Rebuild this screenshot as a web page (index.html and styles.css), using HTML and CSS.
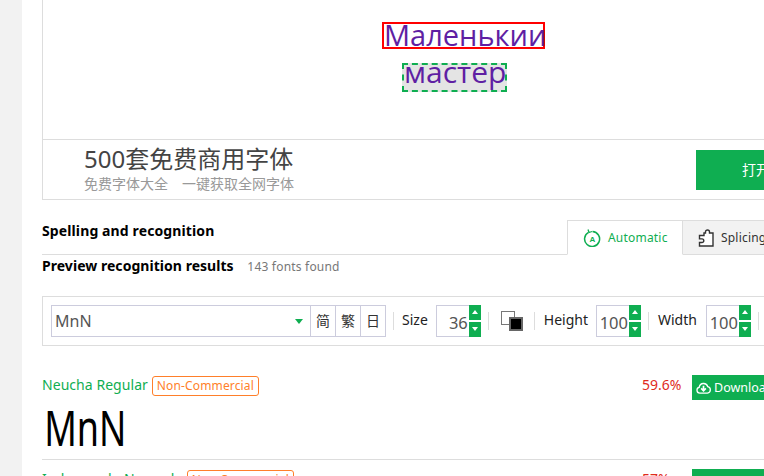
FILE: index.html
```html
<!DOCTYPE html>
<html>
<head>
    <meta charset="utf-8">
    <title>Font recognition</title>
    <link rel="stylesheet" href="styles.css">
</head>
<body>
<div class="page">
    <div class="side"></div>
    <div class="main">
        <div class="preview">
            <div class="canvas">
                <div class="mark mark-red">Маленькии</div>
                <div class="mark mark-green">мастер</div>
            </div>
            <div class="ad">
                <div class="ad-text">
                    <div class="ad-title">500套免费商用字体</div>
                    <div class="ad-sub"><span>免费字体大全</span><span>一键获取全网字体</span></div>
                </div>
                <div class="ad-btn">打开网站</div>
            </div>
        </div>

        <div class="tabs">
            <h3 class="tabs-title">Spelling and recognition</h3>
            <div class="tab tab-on">
                <svg width="18" height="18" viewBox="0 0 18 18" fill="none" stroke="#0fae51" stroke-width="1.5">
                    <path d="M5.500 3.400a7.500 7.500 0 1 0 4-.9"/>
                    <path d="M5 .5l1 3 3-1" stroke-width="1.300"/>
                    <text x="9.500" y="13" font-size="8" font-weight="700" fill="#0fae51" stroke="none" text-anchor="middle" font-family="Liberation Sans">A</text>
                </svg>
                Automatic
            </div>
            <div class="tab">
                <svg width="16" height="18" viewBox="0 0 16 18" fill="#fff" stroke="#333" stroke-width="1.400">
                    <path d="M6 4h1.500V3a2 2 0 0 1 4 0v1H15v13H1.500v-3.500H4a1.800 1.800 0 0 0 0-3.600H1.500V6.500H6z"/>
                </svg>
                Splicing
            </div>
        </div>

        <div class="found">
            <b>Preview recognition results</b>
            <span>143 fonts found</span>
        </div>

        <div class="toolbar">
            <div class="select">MnN<i class="caret"></i></div>
            <div class="lang">简</div>
            <div class="lang">繁</div>
            <div class="lang">日</div>
            <div class="sep"></div>
            <label class="lab">Size</label>
            <div class="num">36<div class="spin"><i class="up"></i><i class="down"></i></div></div>
            <div class="sep sep-a"></div>
            <div class="swatch"><i></i><i></i></div>
            <div class="sep sep-b"></div>
            <label class="lab">Height</label>
            <div class="num">100<div class="spin"><i class="up"></i><i class="down"></i></div></div>
            <div class="sep sep-c"></div>
            <label class="lab lab-w">Width</label>
            <div class="num">100<div class="spin"><i class="up"></i><i class="down"></i></div></div>
            <div class="sep sep-c"></div>
        </div>

        <div class="row">
            <div class="row-head">
                <a class="name">Neucha Regular</a>
                <span class="badge">Non-Commercial</span>
                <span class="pct">59.6%</span>
                <div class="dl">
                    <svg width="15" height="14" viewBox="0 0 16 14" fill="none" stroke="#fff" stroke-width="1.400">
                        <path d="M4 12.500a3.200 3.200 0 0 1-.5-6.300 4.600 4.600 0 0 1 9-.6 3.500 3.500 0 0 1-.3 6.900z"/>
                        <path d="M8 4.500v5M5.500 7.500L8 10l2.500-2.500" stroke-width="1.800"/>
                    </svg>
                    Download
                </div>
            </div>
            <div class="sample">MnN</div>
        </div>
        <div class="row">
            <div class="row-head">
                <a class="name">Indemende Normale</a>
                <span class="badge">Non-Commercial</span>
                <span class="pct">57%</span>
                <div class="dl">Download</div>
            </div>
        </div>
    </div>
</div>
</body>
</html>
```

FILE: styles.css
```css
html, body {
    margin: 0;
    background-color: #fff;
}
body {
    font-family: "Noto Sans", "Noto Sans CJK SC", sans-serif;
    font-size: 14px;
    color: #333;
}
.page {
    display: flex;
    width: 764px;
    height: 476px;
    overflow: hidden;
}
.side {
    flex: none;
    width: 22px;
    background-color: #f2f2f2;
}
.main {
    flex: none;
    width: 843px;
    padding-left: 20px;
}
.preview {
    height: 199px;
    border: 1px solid #ddd;
    border-top: none;
}
.canvas {
    display: flex;
    flex-direction: column;
    align-items: center;
    box-sizing: border-box;
    height: 140px;
    padding-top: 22px;
    border-bottom: 1px solid #ddd;
}
.mark {
    box-sizing: border-box;
    font-family: "Open Sans", sans-serif;
    color: #5f1fa3;
    white-space: nowrap;
    text-align: center;
}
.mark-red {
    width: 163px;
    height: 27px;
    border: 2px solid #f00;
    font-size: 29px;
    line-height: 22px;
}
.mark-green {
    width: 105px;
    height: 29px;
    margin: 14px 18px 0 0;
    border: 2px dashed #0fae51;
    background-color: #e4e4e4;
    font-size: 30px;
    line-height: 14px;
}
.ad {
    display: flex;
    align-items: center;
    justify-content: space-between;
    height: 59px;
    padding-left: 41px;
}
.ad-text {
    align-self: flex-start;
    padding-top: 5px;
}
.ad-title {
    font-size: 24px;
    line-height: 28px;
    color: #444;
}
.ad-sub {
    margin-top: 2px;
    font-size: 14px;
    line-height: 18px;
    color: #999;
}
.ad-sub span + span {
    margin-left: 14px;
}
.ad-btn {
    box-sizing: border-box;
    width: 188px;
    height: 40px;
    padding-left: 46px;
    line-height: 40px;
    color: #fff;
    background-color: #0fae51;
}
.tabs {
    display: flex;
    align-items: flex-end;
    height: 34px;
    margin-top: 20px;
    border-bottom: 1px solid #ddd;
}
.tabs-title {
    width: 525px;
    margin: 0;
    padding-top: 1px;
    align-self: flex-start;
    font-size: 14px;
    line-height: 20px;
    letter-spacing: .12px;
    color: #000;
}
.tab {
    display: flex;
    align-items: center;
    gap: 7px;
    box-sizing: border-box;
    width: 116px;
    height: 35px;
    margin-bottom: -1px;
    padding-left: 15px;
    font-size: 12px;
    letter-spacing: .2px;
    background-color: #f2f2f2;
    border: 1px solid #ddd;
    border-left: none;
}
.tab-on {
    color: #0fae51;
    background-color: #fff;
    border-left: 1px solid #ddd;
    border-bottom-color: #fff;
}
.found {
    height: 41px;
    line-height: 22px;
    letter-spacing: .04px;
    color: #000;
}
.found span {
    margin-left: 10px;
    font-size: 12px;
    letter-spacing: .2px;
    color: #777;
}
.toolbar {
    display: flex;
    align-items: center;
    box-sizing: border-box;
    height: 50px;
    padding-left: 8px;
    border: 1px solid #ddd;
    border-right: none;
}
.select {
    position: relative;
    box-sizing: border-box;
    width: 260px;
    height: 32px;
    padding-left: 3px;
    font-size: 16px;
    line-height: 30px;
    color: #555;
    border: 1px solid #ccd;
}
.caret {
    position: absolute;
    right: 7px;
    top: 13px;
    border: 4px solid transparent;
    border-top: 5px solid #0fae51;
    border-bottom: none;
}
.lang {
    box-sizing: border-box;
    width: 26px;
    height: 32px;
    margin-left: -1px;
    line-height: 30px;
    text-align: center;
    border: 1px solid #ccd;
}
.sep {
    flex: none;
    width: 1px;
    height: 18px;
    margin: 0 8px 0 7px;
    background-color: #ddd;
}
.sep-a {
    margin: 0 12px 0 7px;
}
.sep-b {
    margin: 0 9px 0 11px;
}
.sep-c {
    margin: 0 9px 0 7px;
}
.lab {
    margin-right: 8px;
    padding-bottom: 4px;
    color: #222;
}
.lab-w {
    width: 40px;
}
.num {
    display: flex;
    justify-content: flex-end;
    flex: none;
    box-sizing: border-box;
    width: 45px;
    height: 32px;
    font-size: 16.500px;
    line-height: 34px;
    color: #555;
    border: 1px solid #ccd;
    border-right: none;
}
.spin {
    display: flex;
    flex-direction: column;
    gap: 2px;
    flex: none;
    width: 12px;
    height: 32px;
    margin: -1px 0 0 1px;
}
.up, .down {
    display: block;
    position: relative;
    height: 15px;
    background-color: #0fae51;
}
.up::after, .down::after {
    content: "";
    position: absolute;
    left: 3px;
    top: 5px;
    border: 3px solid transparent;
}
.up::after {
    border-bottom: 4px solid #fff;
    border-top: none;
}
.down::after {
    border-top: 4px solid #fff;
    border-bottom: none;
}
.swatch {
    position: relative;
    flex: none;
    width: 22px;
    height: 20px;
}
.swatch i {
    position: absolute;
    display: block;
    box-sizing: border-box;
    width: 14px;
    height: 14px;
}
.swatch i:first-child {
    left: 0;
    top: 0;
    background-color: #fff;
    border: 1px solid #777;
}
.swatch i:last-child {
    left: 8px;
    top: 6px;
    background-color: #000;
    border: 2px solid #666;
}
.row {
    height: 84px;
    margin-top: 29px;
    border-bottom: 1px solid #ddd;
}
.row + .row {
    margin-top: 9px;
    border-bottom: none;
}
.row + .row .name {
    letter-spacing: .22px;
}
.row-head {
    display: flex;
    align-items: flex-start;
    height: 25px;
}
.name, .pct {
    line-height: 20px;
}
.name {
    color: #0fae51;
    letter-spacing: .05px;
}
.badge {
    box-sizing: border-box;
    width: 107px;
    height: 20px;
    margin: 1px 0 0 4px;
    text-align: center;
    font-size: 12px;
    line-height: 18px;
    letter-spacing: .15px;
    color: #ff7f2a;
    border: 1px solid #ff7f2a;
    border-radius: 3px;
}
.pct {
    flex: none;
    width: 50px;
    margin-left: auto;
    color: #e02b1d;
}
.dl {
    display: flex;
    align-items: center;
    gap: 3px;
    flex: none;
    box-sizing: border-box;
    width: 193px;
    height: 25px;
    padding-left: 4px;
    font-size: 12.500px;
    color: #fff;
    background-color: #0fae51;
}
.sample {
    width: 120px;
    padding-left: 3px;
    font-size: 50px;
    line-height: 54px;
    color: #000;
    transform: scaleX(.72);
    transform-origin: left;
}
```
